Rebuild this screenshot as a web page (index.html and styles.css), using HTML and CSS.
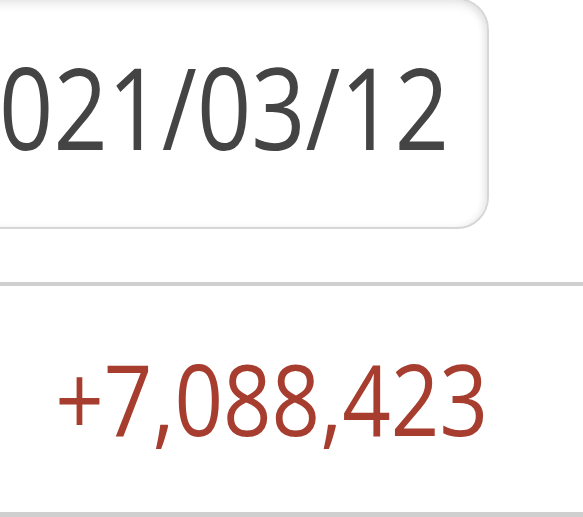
FILE: index.html
```html
<!DOCTYPE html>
<html>
<head>
<meta charset="utf-8">
<link rel="stylesheet" href="styles.css">
</head>
<body>
<div class="page">
  <div class="date-row">
    <div class="date-box"><span class="date-text">2021/03/12</span></div>
  </div>
  <div class="value-row">
    <span class="value-text">+7,088,423</span>
  </div>
</div>
</body>
</html>
```
FILE: styles.css
```css
html, body {
  margin: 0;
  padding: 0;
  background: #fff;
}
.page {
  width: 583px;
  height: 517px;
  overflow: hidden;
  font-family: "Open Sans", "Noto Sans", sans-serif;
  display: flex;
  flex-direction: column;
}
.date-row {
  display: flex;
  justify-content: flex-end;
  padding-right: 94px;
  margin-top: -2px;
  height: 231px;
  flex-shrink: 0;
}
.date-box {
  box-sizing: border-box;
  width: 640px;
  flex-shrink: 0;
  height: 231px;
  border: 2px solid #d6d6d6;
  border-radius: 32px;
  box-shadow: inset 0 5px 10px rgba(0, 0, 0, 0.08), inset -4px 0 6px rgba(0, 0, 0, 0.05);
  display: flex;
  align-items: center;
  justify-content: flex-end;
  padding-right: 38px;
  padding-bottom: 14px;
  background: #fff;
}
.date-text {
  display: inline-block;
  font-size: 95px;
  font-weight: 500;
  line-height: 1;
  color: #444;
  transform: scaleY(1.2);
  white-space: nowrap;
}
.value-row {
  margin-top: 53px;
  border-top: 4px solid #cfcfcf;
  border-bottom: 6px solid #cfcfcf;
  height: 223px;
  flex-shrink: 0;
  display: flex;
  align-items: center;
  justify-content: flex-end;
  padding-right: 95px;
  padding-bottom: 3px;
}
.value-text {
  display: inline-block;
  font-size: 85px;
  font-weight: 500;
  line-height: 1;
  color: #a63d2f;
  transform: scaleY(1.17);
  white-space: nowrap;
}
```
